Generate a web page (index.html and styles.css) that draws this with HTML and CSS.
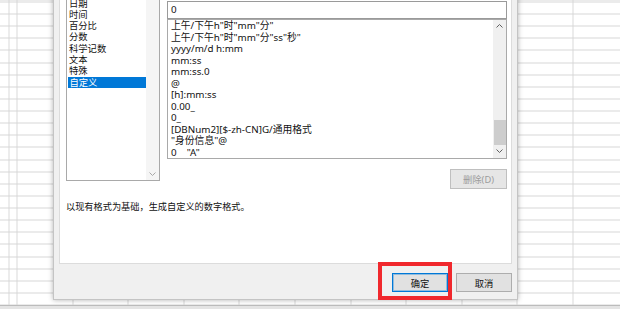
FILE: index.html
```html
<!DOCTYPE html>
<html>
    <head>
        <title>设置单元格格式</title>
        <link rel="stylesheet" href="styles.css">
    </head>
    <body>
        <div class="sheet"></div>
        <div class="hscroll"></div>

        <div class="dialog">
            <div class="tab-page">
                <div class="top-row">
                    <div class="category-list">
                        <div class="list-items">
                            <div class="cat-item">日期</div>
                            <div class="cat-item">时间</div>
                            <div class="cat-item">百分比</div>
                            <div class="cat-item">分数</div>
                            <div class="cat-item">科学记数</div>
                            <div class="cat-item">文本</div>
                            <div class="cat-item">特殊</div>
                            <div class="cat-item selected">自定义</div>
                        </div>
                        <div class="vscroll light">
                            <div class="vscroll-space"></div>
                            <div class="arrow">
                                <svg width="7" height="4" viewBox="0 0 7 4"><path d="M0.5 0.5 L3.5 3.5 L6.5 0.5" fill="none" stroke="#a8a8a8" stroke-width="1"/></svg>
                            </div>
                        </div>
                    </div>
                    <div class="format-col">
                        <div class="type-input">0</div>
                        <div class="format-list">
                            <div class="list-items">
                                <div class="fmt-item">上午/下午h&quot;时&quot;mm&quot;分&quot;</div>
                                <div class="fmt-item">上午/下午h&quot;时&quot;mm&quot;分&quot;ss&quot;秒&quot;</div>
                                <div class="fmt-item">yyyy/m/d h:mm</div>
                                <div class="fmt-item">mm:ss</div>
                                <div class="fmt-item">mm:ss.0</div>
                                <div class="fmt-item">@</div>
                                <div class="fmt-item">[h]:mm:ss</div>
                                <div class="fmt-item">0.00_</div>
                                <div class="fmt-item">0_</div>
                                <div class="fmt-item">[DBNum2][$-zh-CN]G/通用格式</div>
                                <div class="fmt-item">&quot;身份信息&quot;@</div>
                                <div class="fmt-item">0    &quot;A&quot;</div>
                            </div>
                            <div class="vscroll">
                                <div class="arrow">
                                    <svg width="7" height="4" viewBox="0 0 7 4"><path d="M0.5 3.5 L3.5 0.5 L6.5 3.5" fill="none" stroke="#606060" stroke-width="1"/></svg>
                                </div>
                                <div class="vscroll-space"></div>
                                <div class="thumb"></div>
                                <div class="arrow">
                                    <svg width="7" height="4" viewBox="0 0 7 4"><path d="M0.5 0.5 L3.5 3.5 L6.5 0.5" fill="none" stroke="#606060" stroke-width="1"/></svg>
                                </div>
                            </div>
                        </div>
                        <div class="btn-line">
                            <div class="btn disabled">删除(D)</div>
                        </div>
                    </div>
                </div>
                <div class="description">以现有格式为基础，生成自定义的数字格式。</div>
            </div>
            <div class="button-row">
                <div class="btn default">确定</div>
                <div class="btn">取消</div>
            </div>
            <div class="highlight"></div>
        </div>
    </body>
</html>
```
FILE: styles.css
```css
html, body {
    margin: 0;
    padding: 0;
}
body {
    width: 620px;
    height: 309px;
    overflow: hidden;
    position: relative;
    display: flex;
    flex-direction: column;
    background: #ffffff;
    font-family: "Noto Sans", "Noto Sans CJK SC", sans-serif;
    color: #111111;
}
.sheet {
    flex: 1;
    background-color: #ffffff;
    background-image:
        repeating-linear-gradient(to bottom, #d6d6d6 0, #d6d6d6 1px, transparent 1px, transparent 12.12px),
        repeating-linear-gradient(to right, #d9d9d9 0, #d9d9d9 1px, transparent 1px, transparent 55.6px);
    background-position: 0 1.5px, 16.5px 0;
}
.hscroll {
    height: 3px;
    border-top: 1px solid #bcbcbc;
    background: #e4e4e4;
}

/* dialog window over the sheet */
.dialog {
    position: absolute;
    left: 53px;
    top: -20px;
    width: 465px;
    height: 320px;
    box-sizing: border-box;
    border: 1px solid #c4c4c4;
    background: #f0f0f0;
    box-shadow: 0 0 5px rgba(0, 0, 0, 0.3);
    display: flex;
    flex-direction: column;
}
.tab-page {
    flex: 1;
    margin: 0 5px;
    background: #ffffff;
    border: 1px solid #dcdcdc;
    border-top: none;
    padding: 1px 4px 0 6px;
}
.top-row {
    display: flex;
    gap: 7px;
    align-items: flex-start;
}
.category-list {
    width: 94px;
    height: 193px;
    margin-top: 6px;
    box-sizing: border-box;
    border: 1px solid #a9a9a9;
    display: flex;
}
.list-items {
    flex: 1;
    overflow: hidden;
}
.category-list .list-items {
    padding-top: 8.5px;
}
.cat-item {
    height: 11.3px;
    line-height: 11.3px;
    font-size: 9.3px;
    padding-left: 2px;
    white-space: nowrap;
}
.cat-item.selected {
    background: #0078d7;
    color: #ffffff;
    margin-left: 0.5px;
}
.vscroll {
    width: 13px;
    background: #f0f0f0;
    display: flex;
    flex-direction: column;
}
.vscroll.light {
    background: #f5f5f5;
}
.vscroll-space {
    flex: 1;
}
.arrow {
    height: 12px;
    display: flex;
    align-items: center;
    justify-content: center;
}
.thumb {
    height: 25px;
    margin: 0 0 0 1px;
    background: #cdcdcd;
}

.format-col {
    width: 340px;
    margin-top: 19px;
    display: flex;
    flex-direction: column;
}
.type-input {
    height: 18px;
    box-sizing: border-box;
    border: 1px solid #9a9a9a;
    padding-left: 3px;
    font-size: 9.8px;
    line-height: 16px;
}
.format-list {
    height: 140px;
    box-sizing: border-box;
    border: 1px solid #a9a9a9;
    display: flex;
}
.format-list .vscroll {
    padding-bottom: 1px;
}
.fmt-item {
    height: 11.5px;
    line-height: 11.5px;
    font-size: 9.8px;
    padding-left: 3px;
    white-space: pre;
}
.btn-line {
    display: flex;
    justify-content: flex-end;
    margin-top: 10px;
}
.btn {
    width: 56px;
    height: 19px;
    box-sizing: border-box;
    border: 1px solid #adadad;
    background: #e1e1e1;
    font-size: 9.3px;
    display: flex;
    align-items: center;
    justify-content: center;
}
.btn.disabled {
    width: 57px;
    height: 20px;
    color: #9c9c9c;
    border-color: #bfbfbf;
    background: #e6e6e6;
}
.btn.default {
    border-color: #0078d7;
    box-shadow: inset 0 0 0 1px rgba(0, 120, 215, 0.35);
}
.description {
    margin-top: 12px;
    font-size: 9.2px;
    line-height: 12px;
}
.button-row {
    height: 35px;
    box-sizing: border-box;
    padding: 9px 5px 0 0;
    display: flex;
    justify-content: flex-end;
    gap: 8px;
}
.highlight {
    position: absolute;
    left: 324px;
    top: 281px;
    width: 74px;
    height: 38px;
    box-sizing: border-box;
    border: 4px solid #f0282d;
}
```
